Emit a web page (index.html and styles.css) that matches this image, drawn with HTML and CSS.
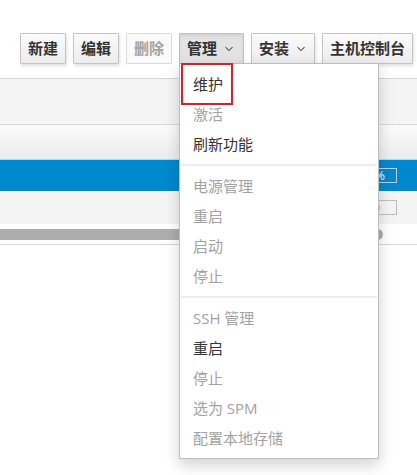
FILE: index.html
```html
<!DOCTYPE html>
<html lang="zh-CN">
<head>
<meta charset="utf-8">
<title>主机</title>
<link rel="stylesheet" href="styles.css">
</head>
<body>
<div class="page">
  <div class="toolbar">
    <button class="btn">新建</button>
    <button class="btn">编辑</button>
    <button class="btn btn-disabled">删除</button>
    <div class="dropdown">
      <button class="btn btn-active">管理<svg class="caret" width="12" height="6" viewBox="0 0 12 6"><path d="M2.5 1.2 L6 4.6 L9.5 1.2" fill="none" stroke="#555" stroke-width="1.1"/></svg></button>
      <ul class="menu">
        <li class="item enabled"><span class="focus">维护</span></li>
        <li class="item">激活</li>
        <li class="item enabled">刷新功能</li>
        <li class="divider"></li>
        <li class="item">电源管理</li>
        <li class="item">重启</li>
        <li class="item">启动</li>
        <li class="item">停止</li>
        <li class="divider"></li>
        <li class="item">SSH 管理</li>
        <li class="item enabled">重启</li>
        <li class="item">停止</li>
        <li class="item">选为 SPM</li>
        <li class="item">配置本地存储</li>
      </ul>
    </div>
    <button class="btn">安装<svg class="caret" width="12" height="6" viewBox="0 0 12 6"><path d="M2.5 1.2 L6 4.6 L9.5 1.2" fill="none" stroke="#555" stroke-width="1.1"/></svg></button>
    <button class="btn">主机控制台</button>
  </div>
  <div class="band"></div>
  <div class="thead"></div>
  <div class="row row-selected"><span class="pct pct-sel">0%</span></div>
  <div class="row row-plain"><span class="pct pct-plain">0</span></div>
  <div class="scroll"><div class="thumb"></div></div>
</div>
</body>
</html>
```
FILE: styles.css
```css
* { box-sizing: border-box; }
html, body { margin: 0; padding: 0; background: #fff; }
body {
  font-family: "Open Sans", "Noto Sans CJK SC", sans-serif;
  font-size: 15px;
  color: #333;
}
.page { width: 417px; height: 475px; overflow: hidden; }

.toolbar {
  height: 79px;
  padding: 33px 4px 0 0;
  display: flex;
  justify-content: flex-end;
  align-items: flex-start;
  gap: 7px;
  border-bottom: 1px solid #d8d8d8;
}
.btn {
  height: 31px;
  padding: 0 7px;
  margin: 0;
  font: inherit;
  font-weight: bold;
  font-size: 15px;
  line-height: 29px;
  color: #333;
  background: linear-gradient(#fbfbfb, #ececec);
  border: 1px solid #c4c4c4;
  border-radius: 1px;
  box-shadow: 1px 2px 3px rgba(0,0,0,0.12);
  display: flex;
  align-items: center;
  white-space: nowrap;
}
.btn-disabled {
  color: #a3a3a3;
  background: #fafafa;
  border-color: #dcdcdc;
  box-shadow: none;
}
.btn-active {
  background: #e3e3e3;
  border-color: #c2c2c2;
  box-shadow: inset 0 2px 3px rgba(0,0,0,0.08);
  padding-right: 8px;
}
.caret { margin-left: 6px; display: block; }
.btn .caret { }

.dropdown { position: relative; }
.menu {
  position: absolute;
  left: 0;
  top: 30px;
  width: 200px;
  margin: 0;
  padding: 5px 0;
  list-style: none;
  background: #fff;
  border: 1px solid #bdbdbd;
  box-shadow: 0 6px 14px rgba(0,0,0,0.18);
  z-index: 10;
}
.item {
  height: 30px;
  line-height: 30px;
  padding-left: 13px;
  color: #a2a2a2;
  white-space: nowrap;
}
.item.enabled { color: #333; }
.divider {
  height: 2px;
  margin: 5px 1px;
  background: #ececec;
}
.focus { position: relative; display: inline-block; }
.focus::after {
  content: "";
  position: absolute;
  left: -12px;
  right: -10px;
  top: -6px;
  bottom: -6px;
  border: 2px solid #e31b23;
}

.band {
  height: 46px;
  background: #f4f4f4;
  border-bottom: 1px solid #d8d8d8;
}
.thead {
  height: 35px;
  background: linear-gradient(#fbfbfb, #ececec);
  border-bottom: 1px solid #d0d0d0;
}
.row {
  height: 32px;
  display: flex;
  align-items: center;
  justify-content: flex-end;
  padding-right: 20px;
}
.row-selected { background: #0088ce; height: 31px; }
.row-plain { background: #f4f4f4; height: 33px; }
.pct {
  width: 40px;
  height: 15px;
  font-size: 13px;
  line-height: 13px;
  text-align: right;
  border: 1px solid #c6c6c6;
}
.pct-sel { color: #fff; border-color: #b9cfe0; padding-right: 11px; }
.pct-plain { color: #555; border-color: #bdbdbd; padding-right: 16px; }

.scroll {
  height: 21px;
  padding-top: 5px;
  border-bottom: 1px solid #d6d6d6;
}
.thumb {
  width: 383px;
  height: 11px;
  background: #adadad;
  border-radius: 0 6px 6px 0;
}
```
